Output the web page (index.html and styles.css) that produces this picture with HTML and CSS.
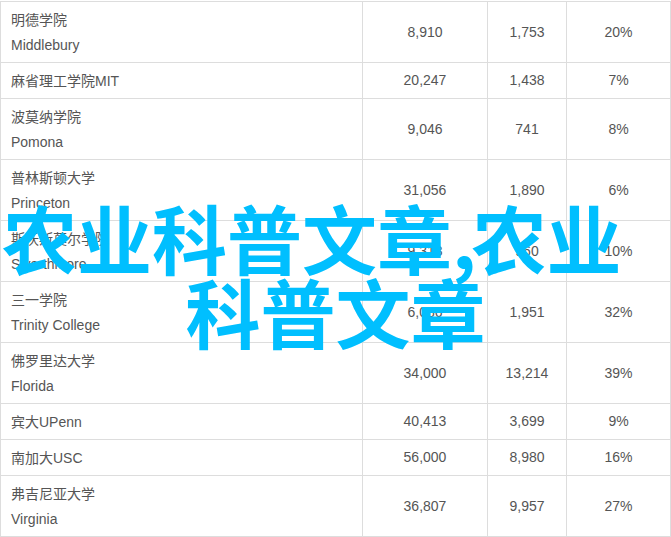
FILE: index.html
```html
<!DOCTYPE html>
<html lang="zh-CN">
<head>
<meta charset="utf-8">
<title>农业科普文章</title>
<link rel="stylesheet" href="styles.css">
</head>
<body>
<table class="data">
<colgroup><col class="c1"><col class="c2"><col class="c3"><col class="c4"></colgroup>
<tbody>
<tr><td class="name">明德学院<br>Middlebury</td><td>8,910</td><td>1,753</td><td>20%</td></tr>
<tr><td class="name">麻省理工学院MIT</td><td>20,247</td><td>1,438</td><td>7%</td></tr>
<tr><td class="name">波莫纳学院<br>Pomona</td><td>9,046</td><td>741</td><td>8%</td></tr>
<tr><td class="name">普林斯顿大学<br>Princeton</td><td>31,056</td><td>1,890</td><td>6%</td></tr>
<tr><td class="name">斯沃斯莫尔学院<br>Swarthmore</td><td>9,313</td><td>960</td><td>10%</td></tr>
<tr><td class="name">三一学院<br>Trinity College</td><td>6,086</td><td>1,951</td><td>32%</td></tr>
<tr><td class="name">佛罗里达大学<br>Florida</td><td>34,000</td><td>13,214</td><td>39%</td></tr>
<tr><td class="name">宾大UPenn</td><td>40,413</td><td>3,699</td><td>9%</td></tr>
<tr><td class="name">南加大USC</td><td>56,000</td><td>8,980</td><td>16%</td></tr>
<tr><td class="name">弗吉尼亚大学<br>Virginia</td><td>36,807</td><td>9,957</td><td>27%</td></tr>
</tbody>
</table>
<h1 class="headline"><span class="line-first">农业科普文章<span class="comma">,</span>农业</span><span class="line-second">科普文章</span></h1>
</body>
</html>
```
FILE: styles.css
```css
html, body {
  margin: 0;
  padding: 0;
  background: #fff;
}
body {
  position: relative;
  width: 671px;
  height: 537px;
  overflow: hidden;
  font-family: "Liberation Sans", "Noto Sans CJK SC", sans-serif;
  font-size: 14px;
  line-height: 25px;
  color: #555;
}
.data {
  border-collapse: collapse;
  table-layout: fixed;
  width: 670px;
  margin-top: 1px;
}
.c1 { width: 362px; }
.c2 { width: 125px; }
.c3 { width: 79px; }
.c4 { width: 104px; }
.data td {
  border: 1px solid #ddd;
  padding: 5px 10px;
  text-align: center;
}
.data td.name {
  padding: 6px 10px 4px;
  text-align: left;
}
.headline {
  position: absolute;
  left: 0;
  top: 200px;
  width: 671px;
  margin: 0;
  white-space: nowrap;
  font-family: "Noto Sans CJK SC", sans-serif;
  font-size: 75px;
  font-weight: 700;
  line-height: 74px;
  color: #00bfff;
}
.line-first,
.line-second {
  display: block;
}
.line-first {
  padding-left: 2px;
}
.line-second {
  text-align: center;
}
.comma {
  letter-spacing: -5px;
}
```
